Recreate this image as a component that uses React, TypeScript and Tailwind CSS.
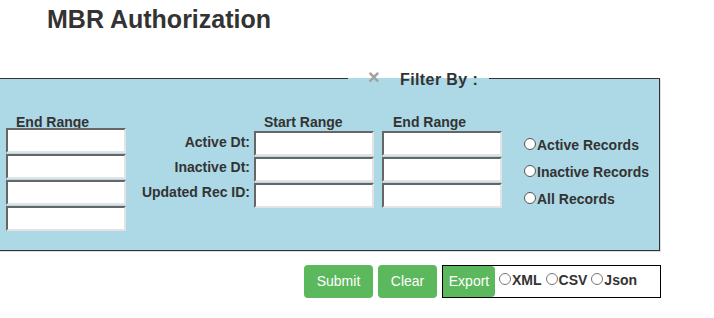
import React from "react";

const inputCls =
  "block w-[120px] h-[25px] bg-white border-2 border-t-[#666] border-l-[#666] border-b-[#e3e3e3] border-r-[#e3e3e3]";

function Field() {
  return <input type="text" className={inputCls} />;
}

function Radio({ label, size = "lg" }: { label: string; size?: "lg" | "sm" }) {
  return (
    <label className="whitespace-nowrap">
      <span
        className={
          size === "lg"
            ? "inline-block w-[12px] h-[12px] rounded-full border border-[#555] bg-white"
            : "inline-block w-[12px] h-[12px] rounded-full border border-[#777] bg-white"
        }
      />
      <span className="ml-[1px]">{label}</span>
    </label>
  );
}

export default function App() {
  return (
    <div className="w-[714px] h-[318px] bg-white text-[#333] font-['Liberation_Sans',Arial,sans-serif] overflow-hidden">
      <h1 className="pl-[47px] pt-[7px] text-[25px] leading-[25px] font-bold">MBR Authorization</h1>

      {/* filter box */}
      <fieldset className="mt-[38px] -ml-[20px] w-[680px] border border-[#333] bg-[#add8e6] shadow-[1px_1px_0_#ddd] pt-[27px] pb-[19px]">
        <legend className="ml-[367px] w-[141px] h-[17px] pl-[20px] leading-[17px] text-[16px] font-bold whitespace-nowrap">
          <span className="relative -top-[1px] inline-block align-top w-[10px] h-[17px] text-[20px] leading-[17px] text-[#a0a0a0] text-center">
            ×
          </span>
          <span className="relative top-[1px] ml-[22px] tracking-[0.4px]">Filter By :</span>
        </legend>

        <div className="flex items-start pl-[25px] text-[14px] font-bold">
          <div className="flex flex-col">
            <div className="h-[14px] leading-[16px] pl-[10px]">End Range</div>
            <div className="flex flex-col gap-[1px]">
              <Field />
              <Field />
              <Field />
              <Field />
            </div>
          </div>

          <div className="ml-[4px] w-[120px] pt-[16px] flex flex-col text-right whitespace-nowrap">
            <div className="h-[25px] leading-[25px]">Active Dt:</div>
            <div className="h-[25px] leading-[25px]">Inactive Dt:</div>
            <div className="h-[24px] leading-[24px]">Updated Rec ID:</div>
          </div>

          <div className="ml-[4px] flex flex-col">
            <div className="h-[17px] leading-[16px] pl-[10px]">Start Range</div>
            <div className="flex flex-col gap-[1px]">
              <Field />
              <Field />
              <Field />
            </div>
          </div>

          <div className="ml-[8px] flex flex-col">
            <div className="h-[17px] leading-[16px] pl-[11px]">End Range</div>
            <div className="flex flex-col gap-[1px]">
              <Field />
              <Field />
              <Field />
            </div>
          </div>

          <div className="ml-[22px] pt-[18px] flex flex-col leading-[27px]">
            <Radio label="Active Records" />
            <Radio label="Inactive Records" />
            <Radio label="All Records" />
          </div>
        </div>
      </fieldset>

      {/* actions */}
      <div className="mt-[14px] pl-[304px] flex items-start gap-[5px] text-[14px]">
        <button className="w-[69px] h-[33px] rounded-[4px] bg-[#5cb85c] text-white">Submit</button>
        <button className="w-[59px] h-[33px] rounded-[4px] bg-[#5cb85c] text-white">Clear</button>
        <div className="w-[219px] h-[33px] border border-black flex items-start">
          <button className="w-[52px] h-[31px] rounded-r-[4px] bg-[#5cb85c] text-white">Export</button>
          <div className="ml-[4px] pt-[6px] leading-[16px] text-[14px] font-bold flex gap-[4px]">
            <Radio label="XML" size="sm" />
            <Radio label="CSV" size="sm" />
            <Radio label="Json" size="sm" />
          </div>
        </div>
      </div>
    </div>
  );
}
